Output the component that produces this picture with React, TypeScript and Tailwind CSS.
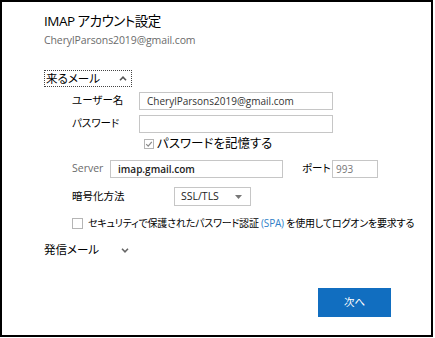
import React from "react";

const font = "font-['Open_Sans','Noto_Sans_CJK_JP',sans-serif] [font-feature-settings:'palt']";

function ChevronUp() {
  return (
    <svg width="8" height="5" viewBox="0 0 8 5" className="block">
      <polyline points="1,4.2 4,1.2 7,4.2" fill="none" stroke="#555" strokeWidth="1.6" />
    </svg>
  );
}
function ChevronDown() {
  return (
    <svg width="8" height="5" viewBox="0 0 8 5" className="block">
      <polyline points="1,0.8 4,3.8 7,0.8" fill="none" stroke="#666" strokeWidth="1.6" />
    </svg>
  );
}

export default function App() {
  return (
    <div className={`w-[433px] h-[337px] border-2 border-black bg-white text-black ${font}`}>
      <div className="flex flex-col pl-[42px] pt-[9px]">
        <div className="h-[20px] leading-[20px] text-[13.5px] tracking-[-0.5px]">IMAP アカウント設定</div>
        <div className="mt-[1px] h-[16px] leading-[16px] text-[10.5px] tracking-[-0.1px] text-[#6b6b6b]">CherylParsons2019@gmail.com</div>

        <div className="mt-[22px] w-[88px] h-[17px] border border-dotted border-[#444] flex items-center justify-between pl-[1px] pr-[4px]">
          <span className="text-[11.5px] leading-[15px]">来るメール</span>
          <ChevronUp />
        </div>

        <div className="mt-[5px] flex items-center h-[18px] pl-[28px]">
          <span className="w-[67px] shrink-0 text-[10.5px]">ユーザー名</span>
          <div className="w-[194px] h-[18px] border border-[#c6c6c6] flex items-center pl-[7px] text-[10px] text-[#333]">CherylParsons2019@gmail.com</div>
        </div>

        <div className="mt-[5px] flex items-center h-[18px] pl-[28px]">
          <span className="w-[67px] shrink-0 text-[10.5px]">パスワード</span>
          <div className="w-[194px] h-[18px] border border-[#c6c6c6]" />
        </div>

        <div className="mt-[3px] flex items-center h-[16px] pl-[100px]">
          <svg width="10" height="10" viewBox="0 0 10 10" className="block shrink-0">
            <rect x="0.5" y="0.5" width="9" height="9" fill="white" stroke="#b5b5b5" />
            <polyline points="2.2,5.2 4.2,7.2 7.8,2.8" fill="none" stroke="#8a8a8a" strokeWidth="1.2" />
          </svg>
          <span className="ml-[3px] text-[12.5px] leading-[16px]">パスワードを記憶する</span>
        </div>

        <div className="mt-[8px] flex items-center h-[18px] pl-[28px]">
          <span className="w-[38px] shrink-0 text-[10.5px] text-[#6b6b6b]">Server</span>
          <div className="w-[173px] shrink-0 h-[18px] border border-[#c6c6c6] flex items-center pl-[7px] text-[10px] text-[#222] font-semibold">imap.gmail.com</div>
          <span className="ml-[19px] w-[30px] shrink-0 text-[10.5px]">ポート</span>
          <div className="w-[46px] shrink-0 h-[18px] border border-[#c6c6c6] flex items-center pl-[3px] text-[10px] text-[#777]">993</div>
        </div>

        <div className="mt-[9px] flex items-center h-[19px] pl-[28px]">
          <span className="w-[102px] shrink-0 text-[10.5px]">暗号化方法</span>
          <div className="w-[77px] h-[19px] border border-[#c6c6c6] flex items-center justify-between pl-[6px] pr-[8px] text-[10.5px] text-[#222]">
            <span>SSL/TLS</span>
            <svg width="7" height="4" viewBox="0 0 7 4" className="block">
              <polygon points="0,0 7,0 3.5,4" fill="#777" />
            </svg>
          </div>
        </div>

        <div className="mt-[10px] flex items-center h-[14px] pl-[28px]">
          <div className="w-[11px] h-[11px] shrink-0 border border-[#b5b5b5]" />
          <span className="ml-[5px] text-[10px] leading-[14px] tracking-[-0.2px] whitespace-nowrap">
            セキュリティで保護されたパスワード認証 <span className="text-[#2f7fc8]">(SPA)</span> を使用してログオンを要求する
          </span>
        </div>

        <div className="mt-[11px] flex items-center h-[18px]">
          <span className="w-[77px] shrink-0 text-[11.5px]">発信メール</span>
          <ChevronDown />
        </div>

        <div className="mt-[29px] flex justify-end pr-[40px]">
          <div className="w-[73px] h-[29px] bg-[#116ec0] flex items-center justify-center text-white text-[10.5px]">次へ</div>
        </div>
      </div>
    </div>
  );
}
